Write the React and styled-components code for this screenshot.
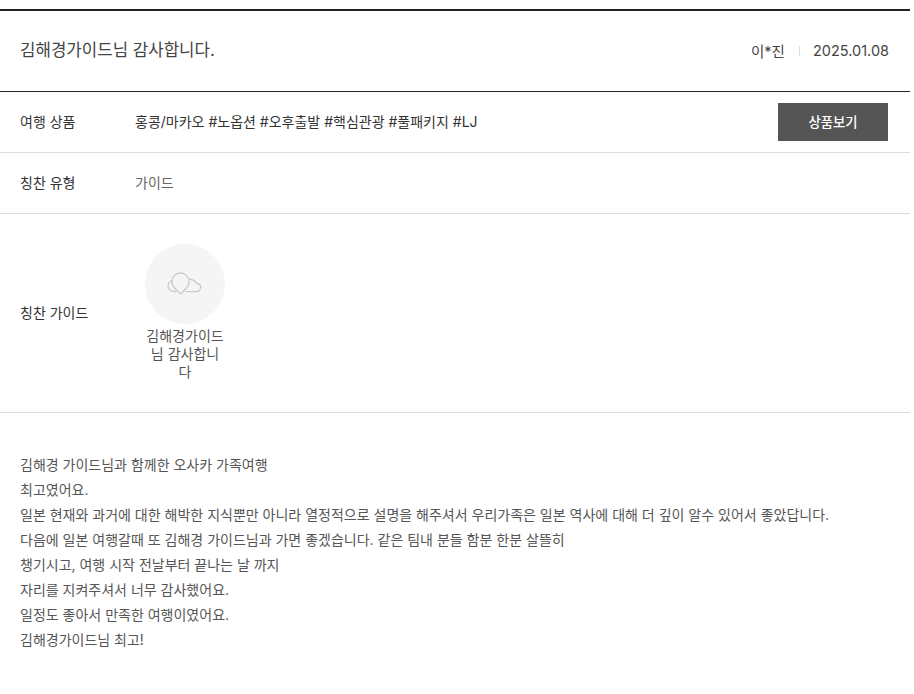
import React from "react";
import styled, { createGlobalStyle } from "styled-components";

const GlobalStyle = createGlobalStyle`
  html, body {
    margin: 0;
    padding: 0;
    background: #fff;
  }
  body {
    font-family: Inter, "Noto Sans CJK KR", sans-serif;
    color: #333;
  }
`;

const Page = styled.div`
  width: 910px;
  padding-top: 9px;
  background: #fff;
`;

const Header = styled.header`
  display: flex;
  align-items: center;
  justify-content: space-between;
  height: 80px;
  padding: 0 21px 0 20px;
  border-top: 2px solid #222;
  border-bottom: 1px solid #222;
`;

const Title = styled.h1`
  margin: 0 0 4px;
  font-size: 16.8px;
  font-weight: 400;
  color: #444;
`;

const Meta = styled.div`
  display: flex;
  align-items: center;
  margin-bottom: 2px;
  font-size: 14.5px;
  color: #444;
`;

const MetaSep = styled.span`
  width: 1px;
  height: 10px;
  margin: 2px 13px 0 14px;
  background: #ddd;
`;

const Row = styled.div`
  display: flex;
  align-items: center;
  height: ${({ $tall }) => ($tall ? "198px" : "60px")};
  padding: 0 22px 0 20px;
  border-bottom: 1px solid #ddd;
`;

const Label = styled.div`
  flex: 0 0 115px;
  padding-bottom: 3px;
  font-size: 14px;
  color: #333;
`;

const Value = styled.div`
  flex: 1;
  padding-bottom: 3px;
  font-size: 14px;
  color: ${({ $muted }) => ($muted ? "#666" : "#333")};
`;

const ViewButton = styled.button`
  width: 110px;
  height: 38px;
  padding: 0 0 2px;
  border: 0;
  background: #555;
  color: #fff;
  font-family: inherit;
  font-size: 13.33px;
  font-weight: 500;
`;

const Guide = styled.div`
  width: 80px;
  margin-left: 10px;
  text-align: center;
`;

const Avatar = styled.div`
  display: flex;
  align-items: center;
  justify-content: center;
  width: 80px;
  height: 80px;
  border-radius: 50%;
  background: #f5f5f5;
`;

const GuideName = styled.div`
  margin-top: 3px;
  padding-bottom: 1px;
  font-size: 14px;
  line-height: 18px;
  color: #555;
  word-break: break-all;
`;

const Review = styled.div`
  padding: 39px 20px 0;
  font-size: 14px;
  line-height: 25px;
  color: #555;
`;

function CloudLogo() {
  return (
    <svg width="40" height="28" viewBox="1 0 40 28" fill="none" stroke="#c9c9c9" strokeWidth="1.3" strokeLinecap="round" strokeLinejoin="round">
      <path d="M16.7 24 L10.5 18 A8.7 8.7 0 1 1 22.5 18 Z" />
      <path d="M8.5 10.5 C5.5 11.5 4 13.5 4 15.7 C4 18.5 6.3 21 9.5 21.3 L12 21.5" />
      <path d="M24.8 9.5 C26 9 29 9.5 30.5 11 C31.5 12 32.5 13 33 13.5 C35.5 14 36.7 15.5 36.7 17 C36.7 20 34.5 21.7 32 21.7 L22 21.7" />
    </svg>
  );
}

export default function App() {
  return (
    <Page>
      <GlobalStyle />
      <Header>
        <Title>김해경가이드님 감사합니다.</Title>
        <Meta>
          <span>이*진</span>
          <MetaSep />
          <span>2025.01.08</span>
        </Meta>
      </Header>
      <Row>
        <Label>여행 상품</Label>
        <Value>홍콩/마카오 #노옵션 #오후출발 #핵심관광 #풀패키지 #LJ</Value>
        <ViewButton>상품보기</ViewButton>
      </Row>
      <Row>
        <Label>칭찬 유형</Label>
        <Value $muted>가이드</Value>
      </Row>
      <Row $tall>
        <Label>칭찬 가이드</Label>
        <Guide>
          <Avatar>
            <CloudLogo />
          </Avatar>
          <GuideName>김해경가이드님 감사합니다</GuideName>
        </Guide>
      </Row>
      <Review>
        김해경 가이드님과 함께한 오사카 가족여행
        <br />
        최고였어요.
        <br />
        일본 현재와 과거에 대한 해박한 지식뿐만 아니라 열정적으로 설명을 해주셔서 우리가족은 일본 역사에 대해 더 깊이 알수 있어서 좋았답니다.
        <br />
        다음에 일본 여행갈때 또 김해경 가이드님과 가면 좋겠습니다. 같은 팀내 분들 함분 한분 살뜰히
        <br />
        챙기시고, 여행 시작 전날부터 끝나는 날 까지
        <br />
        자리를 지켜주셔서 너무 감사했어요.
        <br />
        일정도 좋아서 만족한 여행이였어요.
        <br />
        김해경가이드님 최고!
      </Review>
    </Page>
  );
}
